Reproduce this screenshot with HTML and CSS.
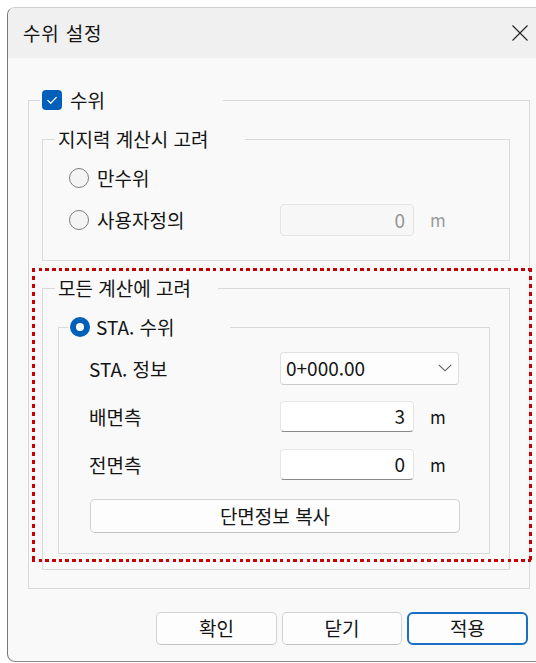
FILE: index.html
```html
<!DOCTYPE html>
<html lang="ko">
<head>
<meta charset="utf-8">
<title>수위 설정</title>
<link rel="stylesheet" href="styles.css">
</head>
<body>
<div class="window">
  <div class="titlebar">
    <span class="title">수위 설정</span>
    <svg class="close" width="16" height="16" viewBox="0 0 16 16" aria-hidden="true">
      <path d="M0.5 0.5 L15.5 15.5 M15.5 0.5 L0.5 15.5" stroke="#1f1f1f" stroke-width="1.1" fill="none"/>
    </svg>
  </div>

  <div class="content">
    <fieldset class="group group-outer">
      <legend class="lg lg-outer">
        <svg class="check" width="20" height="20" viewBox="0 0 20 20" aria-hidden="true">
          <rect x="0" y="0" width="20" height="20" rx="4" fill="#005fb8"/>
          <path d="M5.8 10.4 L8.7 13.2 L14.3 7.4" stroke="#fff" stroke-width="1.3" fill="none" stroke-linecap="round" stroke-linejoin="round"/>
        </svg>
        <span>수위</span>
      </legend>

      <fieldset class="group group-bearing">
        <legend class="lg lg-bearing">지지력 계산시 고려</legend>
        <div class="bearing-body">
          <div class="opt-row">
            <svg class="radio" width="20" height="20" viewBox="0 0 20 20" aria-hidden="true">
              <circle cx="10" cy="10" r="9.5" fill="#f4f4f4" stroke="#7d7d7d"/>
            </svg>
            <span>만수위</span>
          </div>
          <div class="opt-row opt-custom">
            <div class="opt-label">
              <svg class="radio" width="20" height="20" viewBox="0 0 20 20" aria-hidden="true">
                <circle cx="10" cy="10" r="9.5" fill="#f4f4f4" stroke="#7d7d7d"/>
              </svg>
              <span>사용자정의</span>
            </div>
            <div class="field field-disabled">0</div>
            <span class="unit unit-disabled">m</span>
          </div>
        </div>
      </fieldset>

      <fieldset class="group group-all">
        <legend class="lg lg-all">모든 계산에 고려</legend>
        <div class="all-body">
          <fieldset class="group group-sta">
            <legend class="lg lg-sta">
              <svg class="radio" width="20" height="20" viewBox="0 0 20 20" aria-hidden="true">
                <circle cx="10" cy="10" r="10" fill="#005fb8"/>
                <circle cx="10" cy="10" r="4" fill="#fff"/>
              </svg>
              <span>STA. 수위</span>
            </legend>
            <div class="sta-body">
              <div class="form-row row-select">
                <span class="row-label">STA. 정보</span>
                <div class="select">
                  <span>0+000.00</span>
                  <svg class="chevron" width="14" height="8" viewBox="0 0 14 8" aria-hidden="true">
                    <path d="M0.8 0.8 L7 6.8 L13.2 0.8" stroke="#5c5c5c" stroke-width="1.1" fill="none"/>
                  </svg>
                </div>
              </div>
              <div class="form-row row-back">
                <span class="row-label">배면측</span>
                <div class="field">3</div>
                <span class="unit">m</span>
              </div>
              <div class="form-row row-front">
                <span class="row-label">전면측</span>
                <div class="field">0</div>
                <span class="unit">m</span>
              </div>
              <button class="btn btn-wide" type="button">단면정보 복사</button>
            </div>
          </fieldset>
        </div>
      </fieldset>
    </fieldset>

    <div class="footer">
      <button class="btn btn-ok" type="button">확인</button>
      <button class="btn btn-close" type="button">닫기</button>
      <button class="btn btn-apply" type="button">적용</button>
    </div>
  </div>

  <div class="highlight"></div>
</div>
</body>
</html>
```

FILE: styles.css
```css
* {
  box-sizing: border-box;
}

html,
body {
  margin: 0;
  height: 100%;
  overflow: hidden;
  background: #ffffff;
}

body {
  font-family: "Noto Sans CJK KR", "Noto Sans", sans-serif;
  font-size: 19px;
  line-height: 22px;
  color: #141414;
}

/* dialog frame */
.window {
  position: relative;
  margin: 7px 0 0 7px;
  width: 545px;
  height: 655px;
  background: #f9f9f9;
  border: 1px solid #cfcfcf;
  border-left-color: #767676;
  border-bottom-color: #8a8a8a;
  border-radius: 8px 0 0 8px;
  overflow: hidden;
}

.titlebar {
  height: 50px;
  background: #f0f0f0;
  display: flex;
  align-items: center;
  padding: 0 23px 1px 15px;
}

.title {
  font-size: 19px;
  letter-spacing: 0.8px;
}

.close {
  margin-left: auto;
  display: block;
}

.content {
  padding: 31px 0 0 20px;
}

/* group boxes */
.group {
  margin: 0;
  padding: 0;
  min-width: 0;
  border: 1px solid #d9d9d9;
}

.lg {
  padding: 0;
  height: 22px;
  line-height: 22px;
  display: flex;
  align-items: center;
  white-space: nowrap;
}

.group-outer {
  width: 502px;
}

.lg-outer {
  margin-left: 11px;
  width: 183px;
  padding-left: 2px;
  gap: 8px;
}

.check,
.radio {
  display: block;
  flex: none;
}

.group-bearing {
  margin: 17px 0 0 13px;
  width: 468px;
}

.lg-bearing {
  margin-left: 12px;
  width: 190px;
  padding-left: 3px;
}

.bearing-body {
  padding: 16px 0 24px 26px;
}

.opt-row {
  display: flex;
  align-items: center;
  gap: 8px;
  height: 24px;
}

.opt-custom {
  margin-top: 14px;
  height: 32px;
  gap: 0;
}

.opt-label {
  width: 211px;
  display: flex;
  align-items: center;
  gap: 8px;
}

.group-all {
  margin: 16px 0 18px 13px;
  width: 468px;
}

.lg-all {
  margin-left: 12px;
  width: 163px;
  padding-left: 3px;
}

.all-body {
  padding: 17px 0 15px 15px;
}

.group-sta {
  width: 432px;
}

.lg-sta {
  margin-left: 9px;
  width: 162px;
  padding-left: 2px;
  gap: 6px;
}

.sta-body {
  padding: 14px 0 20px 30px;
}

/* form rows */
.form-row {
  display: flex;
  align-items: center;
}

.row-label {
  width: 191px;
  flex: none;
}

.row-select {
  height: 33px;
}

.row-back {
  margin-top: 16px;
  height: 31px;
}

.row-front {
  margin-top: 17px;
  height: 31px;
}

.select {
  width: 179px;
  height: 33px;
  display: flex;
  align-items: center;
  justify-content: space-between;
  padding: 0 5px 1px 5px;
  background: #fdfdfd;
  border: 1px solid #dedede;
  border-bottom-color: #cbcbcb;
  border-radius: 4px;
}

.chevron {
  display: block;
  margin-right: 1px;
}

.field {
  width: 134px;
  height: 31px;
  padding: 0 8px 1px 0;
  display: flex;
  align-items: center;
  justify-content: flex-end;
  background: #ffffff;
  border: 1px solid #e6e6e6;
  border-bottom: 1px solid #8a8a8a;
  border-radius: 4px;
}

.field-disabled {
  height: 32px;
  background: #f7f7f7;
  border: 1px solid #e4e4e4;
  color: #959595;
}

.unit {
  margin-left: 16px;
  font-size: 17px;
}

.unit-disabled {
  color: #9a9a9a;
}

/* buttons */
.btn {
  font: inherit;
  color: #141414;
  background: #fdfdfd;
  border: 1px solid #d2d2d2;
  border-bottom-color: #c2c2c2;
  border-radius: 5px;
  padding: 0 0 1px;
  display: block;
}

.btn-wide {
  margin: 19px 0 0 1px;
  width: 370px;
  height: 34px;
}

.footer {
  margin-top: 23px;
  padding-left: 128px;
  display: flex;
  gap: 5px;
}

.footer .btn {
  width: 121px;
  height: 33px;
}

.footer .btn-close {
  width: 120px;
}

.btn-apply {
  border: 2px solid #1a6fc4;
  border-radius: 6px;
}

/* red dotted annotation frame laid over the "모든 계산에 고려" block */
.highlight {
  position: absolute;
  left: 24px;
  top: 260px;
  width: 500px;
  height: 294px;
  pointer-events: none;
  background:
    repeating-linear-gradient(90deg, #c80000 0 3.5px, transparent 3.5px 6.7px) left top / 100% 3px no-repeat,
    repeating-linear-gradient(90deg, #c80000 0 3.5px, transparent 3.5px 6.7px) left bottom / 100% 3px no-repeat,
    repeating-linear-gradient(180deg, #c80000 0 4px, transparent 4px 8px) left top / 3px 100% no-repeat,
    repeating-linear-gradient(180deg, #c80000 0 4px, transparent 4px 8px) right top / 3px 100% no-repeat;
}
```
